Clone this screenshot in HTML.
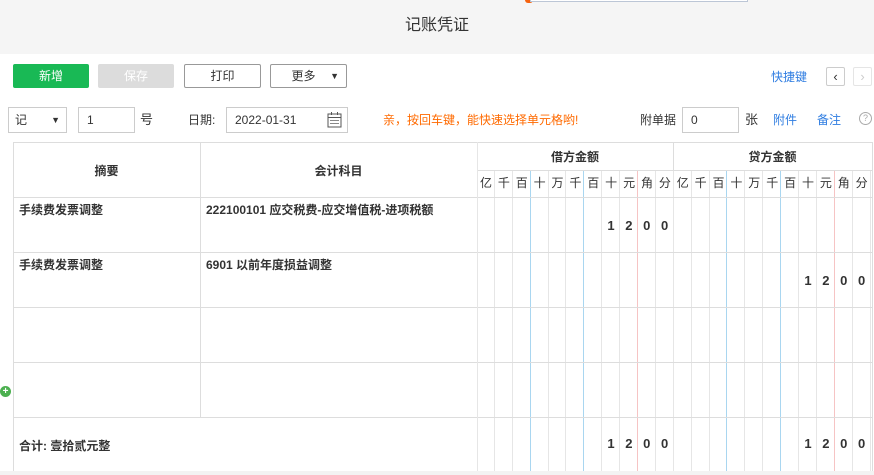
<!DOCTYPE html>
<html><head><meta charset="utf-8"><style>
*{box-sizing:border-box;margin:0;padding:0}
body{width:874px;height:475px;overflow:hidden;background:#fff;font-family:"Liberation Sans","Noto Sans CJK SC",sans-serif;font-size:12px;color:#333;position:relative}
.a{position:absolute}
.hd{left:0;top:0;width:874px;height:54px;background:#f5f5f5}
.btn{position:absolute;top:64px;height:24px;line-height:22px;text-align:center;font-size:12px;border:1px solid #999;border-radius:2px;background:#fff;color:#333}
.inp{position:absolute;top:107px;height:26px;border:1px solid #ccc;line-height:24px;padding-left:8px;font-size:12px;color:#333;background:#fff}
.hl{position:absolute;height:1px;background:#ddd}
.vl{position:absolute;width:1px;background:#ddd}
.grid{position:absolute;left:477px;top:170px;height:301px;display:flex}
.grid div{width:17.9px;height:100%;border-right:1px solid #e6e6e6}
.grid .b{border-right-color:#a9d6f0}
.grid .r{border-right-color:#f6c4c4}
.lab{position:absolute;left:477px;top:170px;height:27px;display:flex}
.lab span{width:17.9px;text-align:center;line-height:27px;font-size:12px;color:#333}
.amt{position:absolute;display:flex;font-weight:bold;font-size:13px;color:#333}
.amt span{width:17.9px;text-align:center}
.t{position:absolute;font-size:12px;font-weight:bold;color:#333}
</style></head><body>
<div class="a hd"></div>
<div class="a" style="left:525px;top:0;width:8px;height:3px;background:#f5620f;border-radius:0 0 4px 4px"></div>
<div class="a" style="left:530px;top:0;width:218px;height:2px;border:1px solid #bcc6d6;border-top:none;background:#fff"></div>
<div class="a" style="left:0;top:14px;width:874px;text-align:center;font-size:16px;color:#333;line-height:24px">记账凭证</div>

<div class="btn" style="left:13px;width:76px;background:#19b955;border-color:#19b955;color:#fff">新增</div>
<div class="btn" style="left:98px;width:76px;background:#dcdcdc;border-color:#dcdcdc;color:#fff">保存</div>
<div class="btn" style="left:184px;width:77px">打印</div>
<div class="btn" style="left:270px;width:77px;padding-right:10px">更多<span style="position:absolute;right:7px;top:0;font-size:9px">▼</span></div>
<div class="a" style="left:771px;top:68px;color:#2f7de1;font-size:12px;line-height:18px">快捷键</div>
<div class="a" style="left:826px;top:67px;width:19px;height:19px;border:1px solid #ccc;border-radius:2px;text-align:center;line-height:17px;font-size:13px;color:#333">‹</div>
<div class="a" style="left:853px;top:67px;width:19px;height:19px;border:1px solid #e5e5e5;border-radius:2px;text-align:center;line-height:17px;font-size:13px;color:#ccc">›</div>

<div class="inp" style="left:8px;width:59px;padding-left:6px">记<span style="position:absolute;right:6px;font-size:9px">▼</span></div>
<div class="inp" style="left:78px;width:57px">1</div>
<div class="a" style="left:140px;top:110px;font-size:13px;line-height:20px">号</div>
<div class="a" style="left:188px;top:110px;font-size:12px;line-height:20px">日期:</div>
<div class="inp" style="left:226px;width:122px">2022-01-31
<svg style="position:absolute;right:5px;top:4px" width="15" height="16" viewBox="0 0 15 16"><rect x="1" y="2" width="13" height="13" fill="none" stroke="#555"/><line x1="1" y1="5.5" x2="14" y2="5.5" stroke="#555"/><line x1="4.5" y1="0" x2="4.5" y2="3" stroke="#555"/><line x1="10.5" y1="0" x2="10.5" y2="3" stroke="#555"/><line x1="3" y1="8.5" x2="12" y2="8.5" stroke="#888"/><line x1="3" y1="11.5" x2="12" y2="11.5" stroke="#888"/></svg></div>
<div class="a" style="left:383px;top:110px;color:#ff6a00;font-size:12px;line-height:20px">亲，按回车键，能快速选择单元格哟!</div>
<div class="a" style="left:640px;top:110px;font-size:12px;line-height:20px">附单据</div>
<div class="inp" style="left:682px;width:57px">0</div>
<div class="a" style="left:745px;top:110px;font-size:13px;line-height:20px">张</div>
<div class="a" style="left:773px;top:110px;color:#2f7de1;font-size:12px;line-height:20px">附件</div>
<div class="a" style="left:817px;top:110px;color:#2f7de1;font-size:12px;line-height:20px">备注</div>
<div class="a" style="left:859px;top:112px;width:13px;height:13px;border:1px solid #aaa;border-radius:50%;font-size:9px;line-height:11px;text-align:center;color:#aaa">?</div>

<!-- table -->
<div class="a" style="left:13px;top:142px;width:860px;height:329px;border:1px solid #ddd;border-bottom:none"></div>
<div class="grid"><div></div><div></div><div class="b"></div><div></div><div></div><div class="b"></div><div></div><div></div><div class="r"></div><div></div><div></div><div></div><div></div><div class="b"></div><div></div><div></div><div class="b"></div><div></div><div></div><div class="r"></div><div></div><div></div></div>
<div class="hl" style="left:477px;top:170px;width:396px"></div>
<div class="hl" style="left:13px;top:197px;width:860px"></div>
<div class="hl" style="left:13px;top:252px;width:860px"></div>
<div class="hl" style="left:13px;top:307px;width:860px"></div>
<div class="hl" style="left:13px;top:362px;width:860px"></div>
<div class="hl" style="left:13px;top:417px;width:860px"></div>
<div class="vl" style="left:200px;top:142px;height:275px"></div>
<div class="vl" style="left:477px;top:142px;height:329px;background:#e6e6e6"></div>
<div class="vl" style="left:673px;top:142px;height:28px"></div>

<div class="t" style="left:13px;top:162px;width:187px;text-align:center">摘要</div>
<div class="t" style="left:200px;top:162px;width:277px;text-align:center">会计科目</div>
<div class="t" style="left:477px;top:148px;width:196px;text-align:center">借方金额</div>
<div class="t" style="left:673px;top:148px;width:199px;text-align:center">贷方金额</div>
<div class="lab"><span>亿</span><span>千</span><span>百</span><span>十</span><span>万</span><span>千</span><span>百</span><span>十</span><span>元</span><span>角</span><span>分</span><span>亿</span><span>千</span><span>百</span><span>十</span><span>万</span><span>千</span><span>百</span><span>十</span><span>元</span><span>角</span><span>分</span></div>

<div class="t" style="left:19px;top:201px">手续费发票调整</div>
<div class="t" style="left:206px;top:201px">222100101 应交税费-应交增值税-进项税额</div>
<div class="t" style="left:19px;top:256px">手续费发票调整</div>
<div class="t" style="left:206px;top:256px">6901 以前年度损益调整</div>
<div class="t" style="left:19px;top:437px">合计: 壹拾贰元整</div>

<div class="amt" style="left:602px;top:218px"><span>1</span><span>2</span><span>0</span><span>0</span></div>
<div class="amt" style="left:799px;top:273px"><span>1</span><span>2</span><span>0</span><span>0</span></div>
<div class="amt" style="left:602px;top:436px"><span>1</span><span>2</span><span>0</span><span>0</span></div>
<div class="amt" style="left:799px;top:436px"><span>1</span><span>2</span><span>0</span><span>0</span></div>

<div class="a" style="left:0;top:386px;width:11px;height:11px;border-radius:50%;background:#4cb050;color:#fff;font-size:10px;line-height:11px;text-align:center;font-weight:bold">+</div>
<div class="a" style="left:0;top:471px;width:874px;height:4px;background:#f3f3f3"></div>
</body></html>
